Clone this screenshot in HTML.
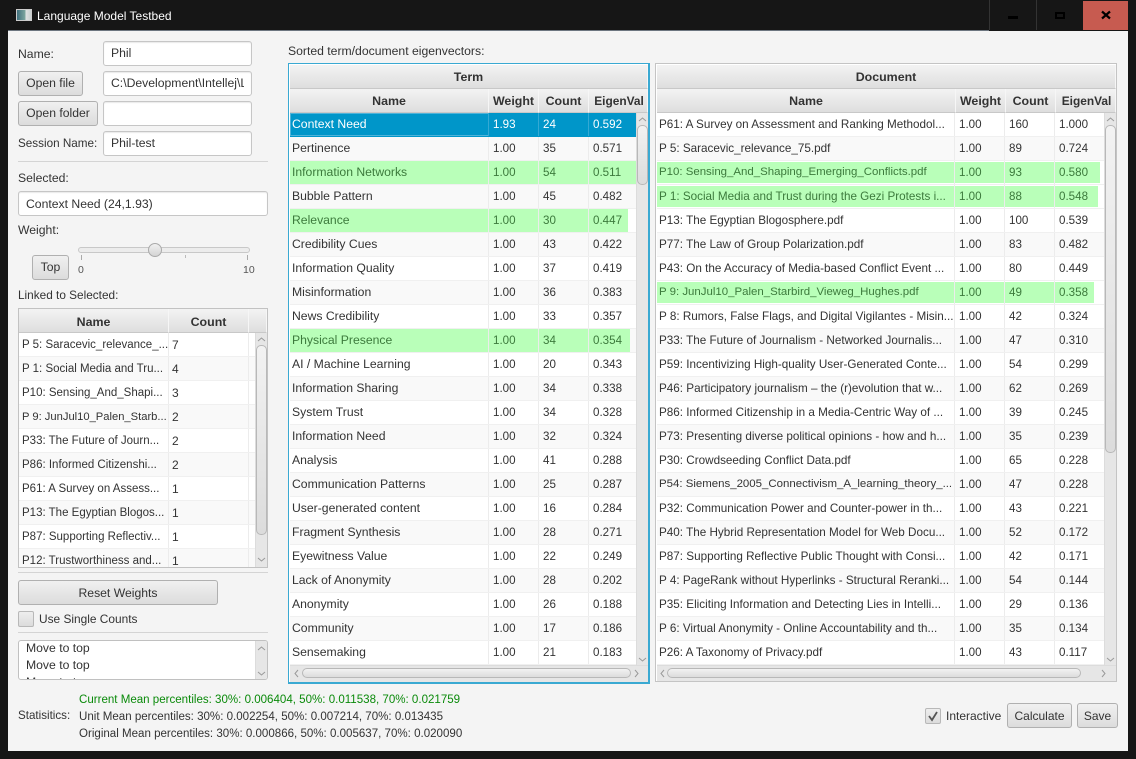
<!DOCTYPE html>
<html><head><meta charset="utf-8"><title>Language Model Testbed</title>
<style>
html,body{margin:0;padding:0;width:1136px;height:759px;overflow:hidden;background:#161616}
*{box-sizing:border-box}
body{font:12.2px "Liberation Sans",sans-serif;color:#333;position:relative}
.a{position:absolute;white-space:nowrap}
.l{position:absolute;white-space:nowrap;line-height:16px;height:16px}
.f{position:absolute;background:#fff;border:1px solid #c6c6c6;border-radius:3px;box-shadow:inset 0 1px 1px #e8e8e8;padding:0 7px;line-height:23px;height:25px;white-space:nowrap;overflow:hidden}
.b{position:absolute;border:1px solid #b0b0b0;border-radius:3px;background:linear-gradient(#f0f0f0,#dcdcdc);text-align:center;line-height:23px;height:25px;white-space:nowrap}
.s{position:absolute;height:1px;background:#d4d4d4}
.t{position:absolute;overflow:hidden;background:#fff}
.h{position:absolute;height:24px;background:linear-gradient(#f3f3f3,#dedede);border-right:1px solid #f6f6f6;border-bottom:1px solid #c8c8c8;text-align:center;font-weight:bold;font-size:12.4px;line-height:25px;color:#333;white-space:nowrap;overflow:hidden}
.r{position:absolute;left:0;height:24px;background:#fff;border-bottom:1px solid #f0f0f0;line-height:23px;white-space:nowrap}
.r:nth-child(even){background:#f9f9f9}
.r span{position:absolute;top:0;height:23px;padding-left:4px;border-right:1px solid #ececec;overflow:hidden;font-size:11.6px}
.r span:first-of-type{padding-left:2px;font-size:12.2px}
.r i{position:absolute;top:1px;left:0;height:21px;background:#b9ffb9}
.g{color:#3c7a3c}
.A span:nth-of-type(1){left:0;width:199px}.A span:nth-of-type(2){left:199px;width:50px}.A span:nth-of-type(3){left:249px;width:50px}.A span:nth-of-type(4){left:299px;width:47px;border-right:0}
.D span:nth-of-type(1){left:0;width:298px;font-size:11.7px}.D span:nth-of-type(2){left:298px;width:50px}.D span:nth-of-type(3){left:348px;width:50px}.D span:nth-of-type(4){left:398px;width:48px;border-right:0}
.L span:nth-of-type(1){left:0;width:150px;font-size:11.5px;padding-left:3px}.L span:nth-of-type(2){left:150px;width:80px;padding-left:3px;font-size:12px}
.L.r{line-height:25px}
.sb{position:absolute;background:#e6e6e6;border-left:1px solid #dcdcdc}
.th{position:absolute;background:linear-gradient(90deg,#f2f2f2,#dcdcdc);border:1px solid #b8b8b8;border-radius:5px}
.tv{position:absolute;background:linear-gradient(#f2f2f2,#dcdcdc);border:1px solid #b8b8b8;border-radius:5px}
svg{position:absolute;overflow:visible}
</style></head>
<body>
<!-- window -->
<div class="a" style="left:8px;top:31px;width:1120px;height:720px;background:#f4f4f4"></div>
<div class="a" style="left:8px;top:30px;width:981px;height:1px;background:#6d7680"></div>
<!-- title bar -->
<div class="a" style="left:16px;top:9px;width:16px;height:12px;background:linear-gradient(90deg,#3f6f7d 0,#7fa8a0 60%,#e0e4e4 62%,#c9d0d0 100%);border:1px solid #ccc"></div>
<div class="l" style="left:37px;top:8px;color:#fff;font-size:12px">Language Model Testbed</div>
<div class="a" style="left:989px;top:0;width:1px;height:30px;background:#333"></div>
<div class="a" style="left:1036px;top:0;width:1px;height:30px;background:#333"></div>
<div class="a" style="left:1083px;top:1px;width:45px;height:29px;background:#c75b50"></div>
<div class="a" style="left:1008px;top:16px;width:10px;height:3px;background:#000"></div>
<div class="a" style="left:1055px;top:12px;width:10px;height:7px;border:2px solid #000"></div>
<svg style="left:0;top:0" width="1136" height="31"><path d="M1102 11.500L1110 18.500M1110 11.500L1102 18.500" stroke="#000" stroke-width="2.200" fill="none"/></svg>

<!-- left panel -->
<div class="l" style="left:18px;top:46px">Name:</div>
<div class="f" style="left:103px;top:41px;width:149px">Phil</div>
<div class="b" style="left:18px;top:71px;width:65px">Open file</div>
<div class="f" style="left:103px;top:71px;width:149px"><span style="display:inline-block;width:133px;overflow:hidden">C:\Development\Intellej\L</span></div>
<div class="b" style="left:18px;top:101px;width:80px">Open folder</div>
<div class="f" style="left:103px;top:101px;width:149px"></div>
<div class="l" style="left:18px;top:136px;font-size:11.7px">Session Name:</div>
<div class="f" style="left:103px;top:131px;width:149px">Phil-test</div>
<div class="s" style="left:18px;top:161px;width:250px"></div>
<div class="l" style="left:18px;top:170px">Selected:</div>
<div class="f" style="left:18px;top:191px;width:250px;line-height:25px">Context Need (24,1.93)</div>
<div class="l" style="left:18px;top:222px">Weight:</div>
<div class="a" style="left:78px;top:247px;width:172px;height:6px;background:#ececec;border:1px solid #c8c8c8;border-radius:3px"></div>
<div class="a" style="left:148px;top:243px;width:14px;height:14px;border-radius:50%;background:linear-gradient(#f0f0f0,#d4d4d4);border:1px solid #aaa"></div>
<div class="a" style="left:81px;top:255px;width:1px;height:5px;background:#aaa"></div>
<div class="a" style="left:185px;top:255px;width:1px;height:3px;background:#bbb"></div>
<div class="a" style="left:247px;top:255px;width:1px;height:5px;background:#aaa"></div>
<div class="l" style="left:78px;top:262px;font-size:10.5px;color:#555">0</div>
<div class="l" style="left:243px;top:262px;font-size:10.5px;color:#555">10</div>
<div class="b" style="left:32px;top:255px;width:37px">Top</div>
<div class="l" style="left:18px;top:287px;font-size:11.8px">Linked to Selected:</div>

<!-- linked table -->
<div class="t" style="left:18px;top:308px;width:250px;height:260px;border:1px solid #c2c2c2">
<div class="h" style="left:0;top:0;width:150px;line-height:26px">Name</div>
<div class="h" style="left:150px;top:0;width:80px;line-height:26px">Count</div>
<div class="h" style="left:230px;top:0;width:18px"></div>
<div class="a" style="left:0;top:24px;width:248px;height:234px">
<div class="r L" style="top:0;width:236px"><span>P 5: Saracevic_relevance_...</span><span>7</span></div>
<div class="r L" style="top:24px;width:236px"><span>P 1: Social Media and Tru...</span><span>4</span></div>
<div class="r L" style="top:48px;width:236px"><span>P10: Sensing_And_Shapi...</span><span>3</span></div>
<div class="r L" style="top:72px;width:236px"><span style="font-size:11.2px">P 9: JunJul10_Palen_Starb...</span><span>2</span></div>
<div class="r L" style="top:96px;width:236px"><span>P33: The Future of Journ...</span><span>2</span></div>
<div class="r L" style="top:120px;width:236px"><span>P86: Informed Citizenshi...</span><span>2</span></div>
<div class="r L" style="top:144px;width:236px"><span>P61: A Survey on Assess...</span><span>1</span></div>
<div class="r L" style="top:168px;width:236px"><span>P13: The Egyptian Blogos...</span><span>1</span></div>
<div class="r L" style="top:192px;width:236px"><span>P87: Supporting Reflectiv...</span><span>1</span></div>
<div class="r L" style="top:216px;width:236px"><span>P12: Trustworthiness and...</span><span>1</span></div>
</div>
<div class="sb" style="left:236px;top:24px;width:12px;height:234px"></div>
<div class="tv" style="left:237px;top:36px;width:11px;height:190px"></div>
<svg style="left:237px;top:27px" width="11" height="6"><path d="M2 5L5.500 2L9 5" stroke="#999" fill="none"/></svg>
<svg style="left:237px;top:248px" width="11" height="6"><path d="M2 1L5.500 4L9 1" stroke="#999" fill="none"/></svg>
</div>

<div class="s" style="left:18px;top:572px;width:250px"></div>
<div class="b" style="left:18px;top:580px;width:200px;line-height:25px">Reset Weights</div>
<div class="a" style="left:18px;top:611px;width:16px;height:16px;border:1px solid #b8b8b8;border-radius:2px;background:linear-gradient(#eee,#dcdcdc)"></div>
<div class="l" style="left:39px;top:611px;font-size:11.900px">Use Single Counts</div>
<div class="s" style="left:18px;top:632px;width:250px"></div>
<div class="a" style="left:18px;top:640px;width:250px;height:40px;background:#fff;border:1px solid #c0c0c0;border-radius:3px;overflow:hidden">
<div class="a" style="left:7px;top:-1px;line-height:17px;white-space:pre">Move to top
Move to top
Move to top</div>
<div class="sb" style="left:236px;top:0;width:13px;height:38px"></div>
<svg style="left:237px;top:4px" width="11" height="6"><path d="M2 5L5.500 2L9 5" stroke="#999" fill="none"/></svg>
<svg style="left:237px;top:30px" width="11" height="6"><path d="M2 1L5.500 4L9 1" stroke="#999" fill="none"/></svg>
</div>

<!-- stats -->
<div class="l" style="left:18px;top:708px;font-size:11.6px">Statisitics:</div>
<div class="l" style="left:79px;top:692px;color:#0a8a0a;font-size:11.55px">Current Mean percentiles: 30%: 0.006404, 50%: 0.011538, 70%: 0.021759</div>
<div class="l" style="left:79px;top:709px;font-size:11.55px">Unit Mean percentiles: 30%: 0.002254, 50%: 0.007214, 70%: 0.013435</div>
<div class="l" style="left:79px;top:726px;font-size:11.55px">Original Mean percentiles: 30%: 0.000866, 50%: 0.005637, 70%: 0.020090</div>

<div class="a" style="left:925px;top:708px;width:16px;height:16px;border:1px solid #b8b8b8;border-radius:2px;background:linear-gradient(#eee,#dcdcdc)"></div>
<svg style="left:925px;top:708px" width="16" height="16"><path d="M4 8L7 12L12 4" stroke="#555" stroke-width="1.800" fill="none"/></svg>
<div class="l" style="left:946px;top:708px;font-size:12px">Interactive</div>
<div class="b" style="left:1007px;top:703px;width:65px;line-height:25px;font-size:12px">Calculate</div>
<div class="b" style="left:1077px;top:703px;width:41px;line-height:25px;font-size:12px">Save</div>

<div class="l" style="left:288px;top:43px">Sorted term/document eigenvectors:</div>

<!-- term table -->
<div class="t" style="left:288px;top:63px;width:362px;height:621px;border:2px solid #3aa9d2;border-width:1px 2px 2px 1px;outline:0">
<div class="h" style="left:1px;top:1px;width:358px;height:24px">Term</div>
<div class="h" style="left:1px;top:25px;width:199px">Name</div>
<div class="h" style="left:200px;top:25px;width:50px">Weight</div>
<div class="h" style="left:250px;top:25px;width:50px">Count</div>
<div class="h" style="left:300px;top:25px;width:59px;font-size:11.9px;padding-left:2px">EigenVal</div>
<div class="a" style="left:1px;top:49px;width:346px;height:552px;overflow:hidden">
<div class="r A" style="top:0;width:346px;background:#0096c9;color:#fff;border-bottom-color:#0096c9"><span style="border-color:#34a9d4;box-shadow:inset 1px 1px 0 #4fb3d9,inset 0 -1px 0 #4fb3d9">Context Need</span><span style="border-color:#34a9d4">1.93</span><span style="border-color:#34a9d4">24</span><span>0.592</span></div>
<div class="r A" style="top:24px;width:346px"><span>Pertinence</span><span>1.00</span><span>35</span><span>0.571</span></div>
<div class="r A g" style="top:48px;width:346px;background:#b9ffb9"><span>Information Networks</span><span>1.00</span><span>54</span><span>0.511</span></div>
<div class="r A" style="top:72px;width:346px"><span>Bubble Pattern</span><span>1.00</span><span>45</span><span>0.482</span></div>
<div class="r A g" style="top:96px;width:346px"><i style="width:338px;top:0;height:23px"></i><span>Relevance</span><span>1.00</span><span>30</span><span>0.447</span></div>
<div class="r A" style="top:120px;width:346px"><span>Credibility Cues</span><span>1.00</span><span>43</span><span>0.422</span></div>
<div class="r A" style="top:144px;width:346px"><span>Information Quality</span><span>1.00</span><span>37</span><span>0.419</span></div>
<div class="r A" style="top:168px;width:346px"><span>Misinformation</span><span>1.00</span><span>36</span><span>0.383</span></div>
<div class="r A" style="top:192px;width:346px"><span>News Credibility</span><span>1.00</span><span>33</span><span>0.357</span></div>
<div class="r A g" style="top:216px;width:346px"><i style="width:340px;top:0;height:23px"></i><span>Physical Presence</span><span>1.00</span><span>34</span><span>0.354</span></div>
<div class="r A" style="top:240px;width:346px"><span>AI / Machine Learning</span><span>1.00</span><span>20</span><span>0.343</span></div>
<div class="r A" style="top:264px;width:346px"><span>Information Sharing</span><span>1.00</span><span>34</span><span>0.338</span></div>
<div class="r A" style="top:288px;width:346px"><span>System Trust</span><span>1.00</span><span>34</span><span>0.328</span></div>
<div class="r A" style="top:312px;width:346px"><span>Information Need</span><span>1.00</span><span>32</span><span>0.324</span></div>
<div class="r A" style="top:336px;width:346px"><span>Analysis</span><span>1.00</span><span>41</span><span>0.288</span></div>
<div class="r A" style="top:360px;width:346px"><span>Communication Patterns</span><span>1.00</span><span>25</span><span>0.287</span></div>
<div class="r A" style="top:384px;width:346px"><span>User-generated content</span><span>1.00</span><span>16</span><span>0.284</span></div>
<div class="r A" style="top:408px;width:346px"><span>Fragment Synthesis</span><span>1.00</span><span>28</span><span>0.271</span></div>
<div class="r A" style="top:432px;width:346px"><span>Eyewitness Value</span><span>1.00</span><span>22</span><span>0.249</span></div>
<div class="r A" style="top:456px;width:346px"><span>Lack of Anonymity</span><span>1.00</span><span>28</span><span>0.202</span></div>
<div class="r A" style="top:480px;width:346px"><span>Anonymity</span><span>1.00</span><span>26</span><span>0.188</span></div>
<div class="r A" style="top:504px;width:346px"><span>Community</span><span>1.00</span><span>17</span><span>0.186</span></div>
<div class="r A" style="top:528px;width:346px"><span>Sensemaking</span><span>1.00</span><span>21</span><span>0.183</span></div>
</div>
<div class="sb" style="left:347px;top:49px;width:12px;height:552px"></div>
<div class="tv" style="left:348px;top:61px;width:11px;height:60px"></div>
<svg style="left:348px;top:52px" width="11" height="6"><path d="M2 5L5.500 2L9 5" stroke="#999" fill="none"/></svg>
<svg style="left:348px;top:593px" width="11" height="6"><path d="M2 1L5.500 4L9 1" stroke="#999" fill="none"/></svg>
<div class="a" style="left:1px;top:601px;width:358px;height:17px;background:#e6e6e6;border-top:1px solid #dcdcdc"></div>
<div class="th" style="left:13px;top:604px;width:329px;height:10px;background:linear-gradient(#f2f2f2,#dcdcdc)"></div>
<svg style="left:4px;top:605px" width="6" height="9"><path d="M5 1L2 4.500L5 8" stroke="#999" fill="none"/></svg>
<svg style="left:345px;top:605px" width="6" height="9"><path d="M1 1L4 4.500L1 8" stroke="#999" fill="none"/></svg>
</div>

<!-- document table -->
<div class="t" style="left:655px;top:63px;width:462px;height:619px;border:1px solid #c4c4c4">
<div class="h" style="left:1px;top:1px;width:459px">Document</div>
<div class="h" style="left:1px;top:25px;width:299px">Name</div>
<div class="h" style="left:300px;top:25px;width:50px">Weight</div>
<div class="h" style="left:350px;top:25px;width:50px">Count</div>
<div class="h" style="left:400px;top:25px;width:60px;font-size:11.9px;padding-left:2px">EigenVal</div>
<div class="a" style="left:1px;top:49px;width:447px;height:552px;overflow:hidden">
<div class="r D" style="top:0;width:447px"><span>P61: A Survey on Assessment and Ranking Methodol...</span><span>1.00</span><span>160</span><span>1.000</span></div>
<div class="r D" style="top:24px;width:447px"><span>P 5: Saracevic_relevance_75.pdf</span><span>1.00</span><span>89</span><span>0.724</span></div>
<div class="r D g" style="top:48px;width:447px;background:#fff"><i style="width:443px"></i><span style="font-size:11.45px">P10: Sensing_And_Shaping_Emerging_Conflicts.pdf</span><span>1.00</span><span>93</span><span>0.580</span></div>
<div class="r D g" style="top:72px;width:447px;background:#fff"><i style="width:441px"></i><span>P 1: Social Media and Trust during the Gezi Protests i...</span><span>1.00</span><span>88</span><span>0.548</span></div>
<div class="r D" style="top:96px;width:447px"><span>P13: The Egyptian Blogosphere.pdf</span><span>1.00</span><span>100</span><span>0.539</span></div>
<div class="r D" style="top:120px;width:447px"><span>P77: The Law of Group Polarization.pdf</span><span>1.00</span><span>83</span><span>0.482</span></div>
<div class="r D" style="top:144px;width:447px"><span>P43: On the Accuracy of Media-based Conflict Event ...</span><span>1.00</span><span>80</span><span>0.449</span></div>
<div class="r D g" style="top:168px;width:447px;background:#fff"><i style="width:437px"></i><span style="font-size:11.45px">P 9: JunJul10_Palen_Starbird_Vieweg_Hughes.pdf</span><span>1.00</span><span>49</span><span>0.358</span></div>
<div class="r D" style="top:192px;width:447px"><span>P 8: Rumors, False Flags, and Digital Vigilantes - Misin...</span><span>1.00</span><span>42</span><span>0.324</span></div>
<div class="r D" style="top:216px;width:447px"><span>P33: The Future of Journalism - Networked Journalis...</span><span>1.00</span><span>47</span><span>0.310</span></div>
<div class="r D" style="top:240px;width:447px"><span>P59: Incentivizing High-quality User-Generated Conte...</span><span>1.00</span><span>54</span><span>0.299</span></div>
<div class="r D" style="top:264px;width:447px"><span>P46: Participatory journalism – the (r)evolution that w...</span><span>1.00</span><span>62</span><span>0.269</span></div>
<div class="r D" style="top:288px;width:447px"><span>P86: Informed Citizenship in a Media-Centric Way of ...</span><span>1.00</span><span>39</span><span>0.245</span></div>
<div class="r D" style="top:312px;width:447px"><span>P73: Presenting diverse political opinions - how and h...</span><span>1.00</span><span>35</span><span>0.239</span></div>
<div class="r D" style="top:336px;width:447px"><span>P30: Crowdseeding Conflict Data.pdf</span><span>1.00</span><span>65</span><span>0.228</span></div>
<div class="r D" style="top:360px;width:447px"><span style="font-size:11.45px">P54: Siemens_2005_Connectivism_A_learning_theory_...</span><span>1.00</span><span>47</span><span>0.228</span></div>
<div class="r D" style="top:384px;width:447px"><span>P32: Communication Power and Counter-power in th...</span><span>1.00</span><span>43</span><span>0.221</span></div>
<div class="r D" style="top:408px;width:447px"><span>P40: The Hybrid Representation Model for Web Docu...</span><span>1.00</span><span>52</span><span>0.172</span></div>
<div class="r D" style="top:432px;width:447px"><span>P87: Supporting Reflective Public Thought with Consi...</span><span>1.00</span><span>42</span><span>0.171</span></div>
<div class="r D" style="top:456px;width:447px"><span>P 4: PageRank without Hyperlinks - Structural Reranki...</span><span>1.00</span><span>54</span><span>0.144</span></div>
<div class="r D" style="top:480px;width:447px"><span>P35: Eliciting Information and Detecting Lies in Intelli...</span><span>1.00</span><span>29</span><span>0.136</span></div>
<div class="r D" style="top:504px;width:447px"><span>P 6: Virtual Anonymity - Online Accountability and th...</span><span>1.00</span><span>35</span><span>0.134</span></div>
<div class="r D" style="top:528px;width:447px"><span>P26: A Taxonomy of Privacy.pdf</span><span>1.00</span><span>43</span><span>0.117</span></div>
</div>
<div class="sb" style="left:448px;top:49px;width:12px;height:552px"></div>
<div class="tv" style="left:449px;top:61px;width:11px;height:328px"></div>
<svg style="left:449px;top:52px" width="11" height="6"><path d="M2 5L5.500 2L9 5" stroke="#999" fill="none"/></svg>
<svg style="left:449px;top:593px" width="11" height="6"><path d="M2 1L5.500 4L9 1" stroke="#999" fill="none"/></svg>
<div class="a" style="left:1px;top:601px;width:459px;height:16px;background:#e6e6e6;border-top:1px solid #dcdcdc"></div>
<div class="th" style="left:11px;top:604px;width:414px;height:10px;background:linear-gradient(#f2f2f2,#dcdcdc)"></div>
<svg style="left:3px;top:605px" width="6" height="9"><path d="M5 1L2 4.500L5 8" stroke="#999" fill="none"/></svg>
<svg style="left:445px;top:605px" width="6" height="9"><path d="M1 1L4 4.500L1 8" stroke="#999" fill="none"/></svg>
</div>
</body></html>
